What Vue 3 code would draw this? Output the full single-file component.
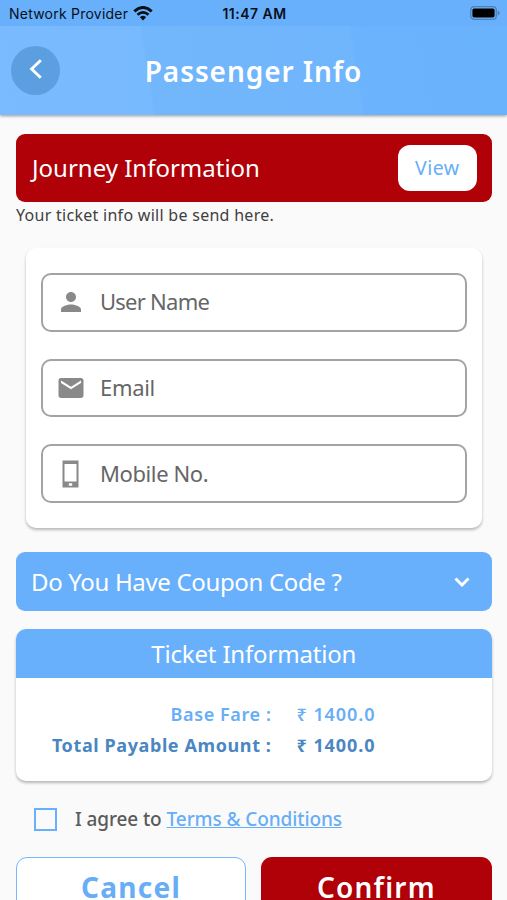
<script setup>
import { ref } from 'vue'

const userName = ref('')
const email = ref('')
const mobile = ref('')
const agreed = ref(false)
</script>

<template>
  <div class="screen">
    <header class="top">
      <div class="status">
        <div class="carrier">
          <span class="provider">Network Provider</span>
          <svg class="wifi" viewBox="0 0 20 15">
            <path d="M1.3 5.4 Q10 -2.4 18.7 5.4" fill="none" stroke="#071019" stroke-width="3" />
            <path d="M4.5 8.8 Q10 3.9 15.5 8.8" fill="none" stroke="#071019" stroke-width="2.7" />
            <path d="M6.9 11.2 Q10 8.4 13.1 11.2 L10 14.4 Z" fill="#071019" />
          </svg>
        </div>
        <span class="clock">11:47 AM</span>
        <svg class="battery" viewBox="0 0 30 14">
          <rect x="0.7" y="0.7" width="25.6" height="12.6" rx="3.4" fill="none" stroke="#4e80b5" stroke-width="1.3" />
          <rect x="2.4" y="2.4" width="22.2" height="9.2" rx="1.8" fill="#000" />
          <path d="M27.6 4.6 Q29.7 5.3 29.7 7 Q29.7 8.7 27.6 9.4 Z" fill="#4e80b5" />
        </svg>
      </div>
      <div class="appbar">
        <button class="back">
          <svg viewBox="0 0 14 20"><path d="M11.8 1.2 L2.6 10 L11.8 18.8" /></svg>
        </button>
        <h1><span>Passenger Info</span></h1>
      </div>
    </header>

    <main>
      <section class="journey">
        <span class="journey-title">Journey Information</span>
        <button class="view">View</button>
      </section>
      <p class="note">Your ticket info will be send here.</p>

      <form class="card form" @submit.prevent>
        <label class="field">
          <svg viewBox="0 0 24 24"><path d="M12 12c2.21 0 4-1.79 4-4s-1.79-4-4-4-4 1.79-4 4 1.79 4 4 4zm0 2c-2.67 0-8 1.34-8 4v2h16v-2c0-2.66-5.33-4-8-4z" /></svg>
          <input v-model="userName" class="user" type="text" placeholder="User Name" />
        </label>
        <label class="field">
          <svg viewBox="0 0 24 24"><path d="M20 4H4c-1.100 0-1.990.9-1.990 2L2 18c0 1.100.9 2 2 2h16c1.100 0 2-.9 2-2V6c0-1.100-.9-2-2-2zm0 4l-8 5-8-5V6l8 5 8-5v2z" /></svg>
          <input v-model="email" class="mail" type="text" placeholder="Email" />
        </label>
        <label class="field">
          <svg viewBox="0 0 30 30"><path fill-rule="evenodd" d="M6.500 1.500h16v27h-16zM8.500 5v17.500h12V5zM12.800 24.200v2.600h3.400v-2.600z" /></svg>
          <input v-model="mobile" class="phone" type="text" placeholder="Mobile No." />
        </label>
      </form>

      <section class="coupon">
        <span>Do You Have Coupon Code ?</span>
        <svg viewBox="0 0 16 10"><path d="M1.500 1.500 L8 8 L14.500 1.500" /></svg>
      </section>

      <section class="card ticket">
        <h2><span>Ticket Information</span></h2>
        <div class="fares">
          <span class="fare-label base">Base Fare :</span>
          <span class="amount base-amount">₹ 1400.0</span>
          <span class="fare-label total">Total Payable Amount :</span>
          <span class="amount total-amount">₹ 1400.0</span>
        </div>
      </section>

      <div class="agree">
        <button class="box" role="checkbox" :aria-checked="agreed" @click="agreed = !agreed"></button>
        <span class="agree-text">I agree to</span>
        <a class="terms">Terms &amp; Conditions</a>
      </div>

      <div class="actions">
        <button class="cancel">Cancel</button>
        <button class="confirm">Confirm</button>
      </div>
    </main>
  </div>
</template>

<style>
body {
  background: #fafafa;
  overflow: hidden;
}
</style>

<style scoped>
.screen {
  width: 507px;
  height: 900px;
  overflow: hidden;
  background: #fafafa;
  font-family: "Noto Sans", "Open Sans", sans-serif;
  white-space: nowrap;
}
button,
input {
  font-family: inherit;
  border: 0;
  padding: 0;
  margin: 0;
}
h1,
h2,
p {
  margin: 0;
  font-weight: 400;
}
.top {
  height: 115px;
  background: linear-gradient(81deg, #7abaff 0, #78bafe 29.200%, #72b6fb 29.700%, #70b6fc 69%, #6bb3fc 69.500%, #69b2fc 100%);
  box-shadow: 0 1px 3px rgba(0, 0, 0, 0.4);
}
.status {
  height: 26px;
  box-sizing: border-box;
  padding: 0 7px 0 9px;
  display: grid;
  grid-template-columns: 1fr auto 1fr;
  align-items: center;
  background: #68b0fc;
  color: #071019;
  font-family: Inter, sans-serif;
}
.carrier {
  display: flex;
  align-items: center;
  gap: 5px;
}
.provider {
  width: 119px;
  font-size: 14px;
  letter-spacing: 0.230px;
}
.wifi {
  width: 20px;
  height: 15px;
}
.clock {
  font-size: 14px;
  font-weight: 600;
  letter-spacing: 0.480px;
}
.battery {
  width: 30px;
  height: 14px;
  justify-self: end;
}
.appbar {
  height: 89px;
  padding: 0 11px;
  display: grid;
  grid-template-columns: 49px 1fr 49px;
  align-items: center;
}
.back {
  width: 49px;
  height: 49px;
  border-radius: 50%;
  background: #5b9fe0;
  display: grid;
  place-items: center;
}
.back svg {
  width: 14px;
  height: 20px;
  margin-bottom: 3px;
}
.back path,
.coupon path {
  fill: none;
  stroke: #fff;
  stroke-width: 2.900;
}
h1 {
  text-align: center;
  color: #fff;
  font-size: 28px;
  font-weight: 600;
  letter-spacing: 0.920px;
}
main {
  padding: 18.500px 15.500px 0 16px;
}
.journey {
  height: 68.500px;
  box-sizing: border-box;
  padding: 0 15px 0 16px;
  border-radius: 9px;
  background: #b00008;
  color: #fff;
  display: flex;
  align-items: center;
  justify-content: space-between;
}
.journey-title {
  font-size: 24px;
}
.view {
  width: 78.500px;
  height: 46px;
  border-radius: 12px;
  background: #fff;
  color: #67aef6;
  font-size: 19.500px;
  letter-spacing: 0.400px;
}
.note {
  height: 28px;
  line-height: 27px;
  font-size: 16px;
  letter-spacing: 0.280px;
  color: #3f3f3f;
}
.card {
  background: #fff;
  border-radius: 10px;
  box-shadow: 0 2px 3px rgba(0, 0, 0, 0.270);
}
.form {
  height: 280px;
  box-sizing: border-box;
  margin: 18px 9.500px 0 10px;
  padding: 25px 15px;
  display: flex;
  flex-direction: column;
  gap: 27px;
}
.field {
  height: 58.700px;
  box-sizing: border-box;
  flex: none;
  border: 2px solid #a3a3a3;
  border-radius: 10px;
  padding-left: 12.500px;
  display: flex;
  align-items: center;
  gap: 14.500px;
}
.field svg {
  width: 30px;
  height: 30px;
  flex: none;
  fill: #898989;
}
.field input {
  flex: 1;
  min-width: 0;
  padding-bottom: 2px;
  background: none;
  outline: 0;
  font-size: 22px;
}
.field .user {
  letter-spacing: -0.750px;
}
.field .mail {
  letter-spacing: -0.300px;
}
.field .phone {
  letter-spacing: -0.400px;
}
.field input::placeholder {
  color: #666;
  opacity: 1;
}
.coupon {
  height: 59px;
  box-sizing: border-box;
  margin-top: 24px;
  padding: 0 22px 0 15px;
  border-radius: 9px;
  background: #68b0fc;
  color: #fff;
  font-size: 24px;
  letter-spacing: -0.340px;
  display: flex;
  align-items: center;
  justify-content: space-between;
}
.coupon svg {
  width: 16px;
  height: 10px;
}
.ticket {
  height: 152px;
  margin-top: 18px;
  overflow: hidden;
}
h2 {
  height: 48.500px;
  line-height: 50px;
  background: #68b0fc;
  color: #fff;
  text-align: center;
  font-size: 24px;
  letter-spacing: -0.180px;
}
.fares {
  padding-top: 21px;
  display: grid;
  grid-template-columns: 255.500px auto;
  grid-auto-rows: 31px;
  column-gap: 25px;
  align-items: center;
  font-size: 18px;
  font-weight: 600;
  letter-spacing: 0.600px;
  color: #67aef6;
}
.fare-label {
  text-align: right;
}
.amount {
  letter-spacing: 0.950px;
}
.total,
.total-amount {
  color: #4a87c2;
  font-weight: 700;
}
.agree {
  height: 76px;
  display: flex;
  align-items: center;
  padding-left: 18px;
  font-size: 19px;
  font-weight: 500;
  letter-spacing: -0.100px;
  color: #5b5b5b;
}
.box {
  width: 23px;
  height: 23px;
  box-sizing: border-box;
  border: 2px solid #68b0fc;
  background: none;
}
.agree-text {
  margin-left: 18px;
}
.terms {
  margin-left: 5px;
  color: #67aef6;
  text-decoration: underline;
}
.actions {
  display: grid;
  grid-template-columns: 1fr 1fr;
  gap: 15px;
}
.actions button {
  height: 60px;
  border-radius: 11px;
  font-size: 28px;
}
.actions .cancel {
  border: 1.500px solid #78b7f9;
  background: #fff;
  color: #67aef6;
  font-weight: 700;
  letter-spacing: 1.300px;
}
.actions .confirm {
  background: #b00008;
  color: #fff;
  font-weight: 600;
  letter-spacing: 1.200px;
}
</style>
